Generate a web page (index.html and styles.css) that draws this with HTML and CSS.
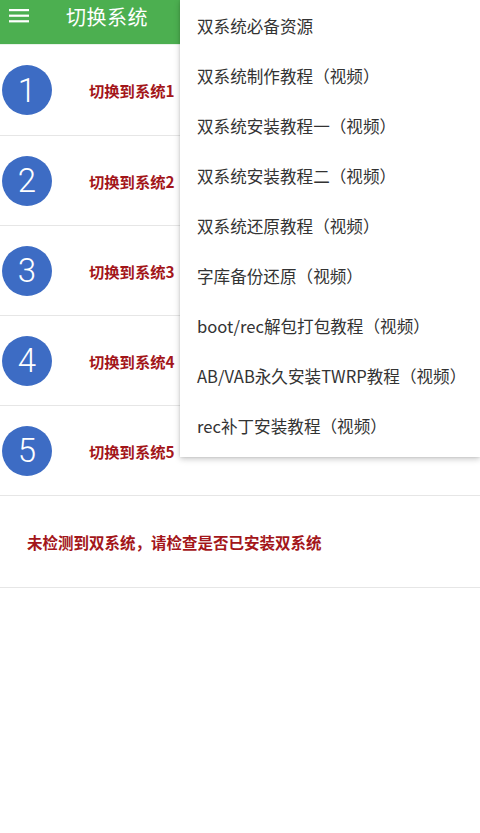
FILE: index.html
```html
<!DOCTYPE html>
<html lang="zh-CN">
<head>
<meta charset="utf-8">
<title>切换系统</title>
<link rel="stylesheet" href="styles.css">
</head>
<body>
<header class="appbar">
  <span class="menu-btn">
    <svg width="20" height="14" viewBox="0 0 20 14"><rect x="0" y="0" width="20" height="2.2" fill="#fff"/><rect x="0" y="5.6" width="20" height="2.2" fill="#fff"/><rect x="0" y="11.2" width="20" height="2.2" fill="#fff"/></svg>
  </span>
  <span class="title">切换系统</span>
</header>
<main class="list">
  <div class="row first"><span class="num">1</span><span class="label">切换到系统1</span></div>
  <div class="row"><span class="num">2</span><span class="label">切换到系统2</span></div>
  <div class="row"><span class="num">3</span><span class="label">切换到系统3</span></div>
  <div class="row"><span class="num">4</span><span class="label">切换到系统4</span></div>
  <div class="row"><span class="num">5</span><span class="label">切换到系统5</span></div>
  <div class="row status"><span class="label">未检测到双系统，请检查是否已安装双系统</span></div>
</main>
<nav class="popup">
  <div class="item">双系统必备资源</div>
  <div class="item">双系统制作教程（视频）</div>
  <div class="item">双系统安装教程一（视频）</div>
  <div class="item">双系统安装教程二（视频）</div>
  <div class="item">双系统还原教程（视频）</div>
  <div class="item">字库备份还原（视频）</div>
  <div class="item">boot/rec解包打包教程（视频）</div>
  <div class="item">AB/VAB永久安装TWRP教程（视频）</div>
  <div class="item">rec补丁安装教程（视频）</div>
</nav>
</body>
</html>
```
FILE: styles.css
```css
* { box-sizing: border-box; }
html, body { margin: 0; padding: 0; background: #fff; }
body {
  width: 480px;
  height: 833px;
  overflow: hidden;
  font-family: "Noto Sans CJK SC", "Noto Sans", Roboto, sans-serif;
  position: relative;
}
.appbar {
  height: 44px;
  background: #4caf50;
  display: flex;
  align-items: center;
  padding-left: 9px;
  border-bottom: 1px solid #e9f3e9;
  box-sizing: content-box;
}
.menu-btn { display: flex; width: 20px; height: 14px; margin-top: -13px; }
.title {
  color: #fff;
  font-size: 20px;
  margin-left: 37px;
  margin-top: -12px;
  letter-spacing: 0.5px;
}
.list { display: flex; flex-direction: column; }
.row {
  height: 90px;
  border-bottom: 1px solid #e6e6e6;
  display: flex;
  align-items: center;
  padding-left: 2px;
}
.row.first { height: 91px; }
.num {
  width: 50px;
  height: 50px;
  border-radius: 50%;
  background: #3d6cc4;
  color: #fff;
  font-family: Roboto, "Noto Sans", sans-serif;
  font-weight: 300;
  font-size: 33px;
  display: flex;
  align-items: center;
  justify-content: center;
  line-height: 1;
}
.label {
  color: #a3161a;
  font-weight: bold;
  font-size: 15.3px;
  margin-left: 37px;
}
.status { height: 92px; padding-left: 27px; }
.status .label { margin-left: 0; font-size: 15.5px; }
.popup {
  position: absolute;
  top: 0;
  left: 180px;
  width: 300px;
  height: 457px;
  background: #fff;
  box-shadow: 0 2px 6px rgba(0,0,0,0.22), 0 0 2px rgba(0,0,0,0.12);
  padding-top: 1px;
  display: flex;
  flex-direction: column;
}
.item {
  height: 50px;
  display: flex;
  align-items: center;
  padding-left: 17px;
  font-size: 16.6px;
  color: #333;
}
```
